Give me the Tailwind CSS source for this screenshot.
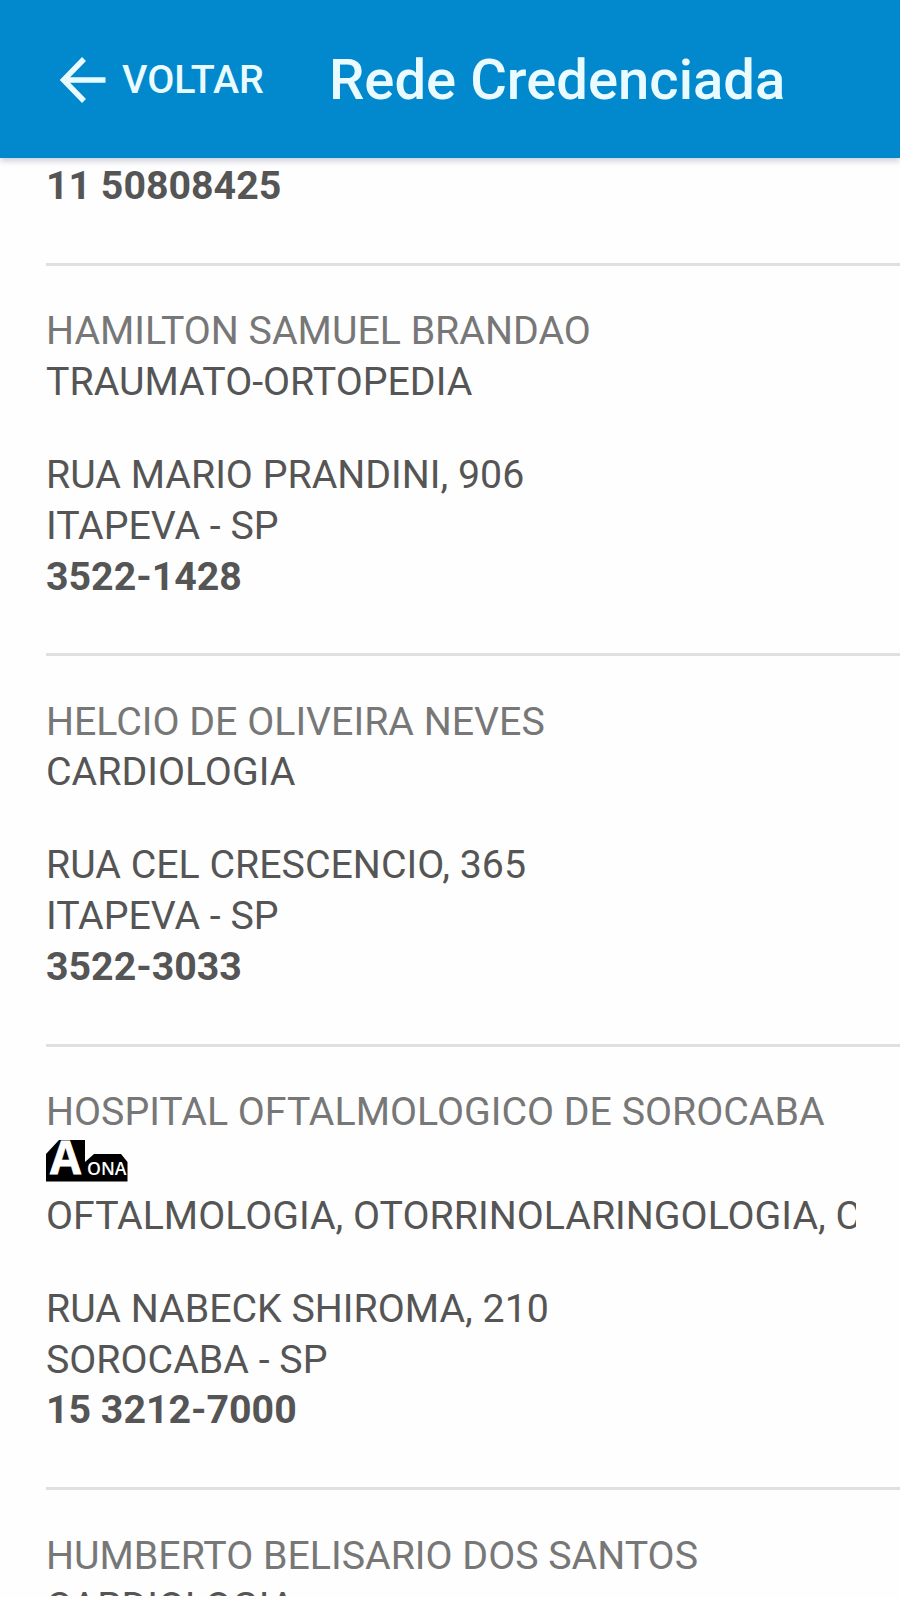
<!DOCTYPE html>
<html lang="pt-BR">
<head>
    <meta charset="UTF-8">
    <title>Rede Credenciada</title>
    <script src="https://cdn.jsdelivr.net/npm/@tailwindcss/browser@4"></script>
</head>
<body class="bg-[#fefefe] font-['Roboto',sans-serif]">
    <div class="h-[1596px] overflow-hidden flex flex-col">
        <header class="relative h-[158px] shrink-0 bg-[#0288cd] text-[#e9fbff] flex items-center pt-[2px] pl-[60px] shadow-[0_3px_6px_rgba(60,60,110,0.25)]">
            <a href="#" class="flex items-center w-[269px]">
                <svg class="w-[46px] h-[46px] mr-4" viewBox="0 0 46 46" fill="none" stroke="currentColor" stroke-width="5.500">
                    <path d="M45.500 23H4M24 2L3.500 23L24 44"/>
                </svg>
                <span class="text-[39.400px] font-medium leading-none">VOLTAR</span>
            </a>
            <h1 class="text-[56.200px] font-medium leading-none whitespace-nowrap">Rede Credenciada</h1>
        </header>

        <main class="pl-[46px] pt-[3.300px] text-[39.300px] leading-[50.700px] text-[#555] whitespace-nowrap">
            <div class="pb-[51.200px]">
                <p class="font-bold">11 50808425</p>
            </div>

            <div class="border-t-3 border-[#e0e0e0] pt-[40.300px] pb-[51.200px]">
                <h2 class="text-[#777]">HAMILTON SAMUEL BRANDAO</h2>
                <p class="mb-[42.300px]">TRAUMATO-ORTOPEDIA</p>
                <p>RUA MARIO PRANDINI, 906</p>
                <p>ITAPEVA - SP</p>
                <p class="font-bold">3522-1428</p>
            </div>

            <div class="border-t-3 border-[#e0e0e0] pt-[40.300px] pb-[51.200px]">
                <h2 class="text-[#777]">HELCIO DE OLIVEIRA NEVES</h2>
                <p class="mb-[42.300px]">CARDIOLOGIA</p>
                <p>RUA CEL CRESCENCIO, 365</p>
                <p>ITAPEVA - SP</p>
                <p class="font-bold">3522-3033</p>
            </div>

            <div class="border-t-3 border-[#e0e0e0] pt-[40.300px] pb-[51.200px]">
                <h2 class="text-[#777]">HOSPITAL OFTALMOLOGICO DE SOROCABA</h2>
                <!-- ONA accreditation badge -->
                <div class="h-[53.300px] pt-[2.300px]">
                    <svg class="w-[82px] h-[42px]" viewBox="0 0 82 42">
                        <path d="M0 14L13 0H39V22L48 14H75L81.500 22V41.500H0Z" fill="#000"/>
                        <text x="4" y="34" font-family="Open Sans" font-weight="700" font-size="47" textLength="31" lengthAdjust="spacingAndGlyphs" fill="#fff" stroke="#fff" stroke-width="0.8">A</text>
                        <text x="41" y="34.500" font-family="Open Sans" font-weight="600" font-size="18.500" textLength="39.500" lengthAdjust="spacingAndGlyphs" fill="#fff">ONA</text>
                    </svg>
                </div>
                <p class="mb-[42.300px] w-[810px] overflow-hidden">OFTALMOLOGIA, OTORRINOLARINGOLOGIA, CIRURGIA</p>
                <p>RUA NABECK SHIROMA, 210</p>
                <p>SOROCABA - SP</p>
                <p class="font-bold">15 3212-7000</p>
            </div>

            <div class="border-t-3 border-[#e0e0e0] pt-[40.500px]">
                <h2 class="text-[#777]">HUMBERTO BELISARIO DOS SANTOS</h2>
                <p>CARDIOLOGIA</p>
            </div>
        </main>
    </div>
</body>
</html>
